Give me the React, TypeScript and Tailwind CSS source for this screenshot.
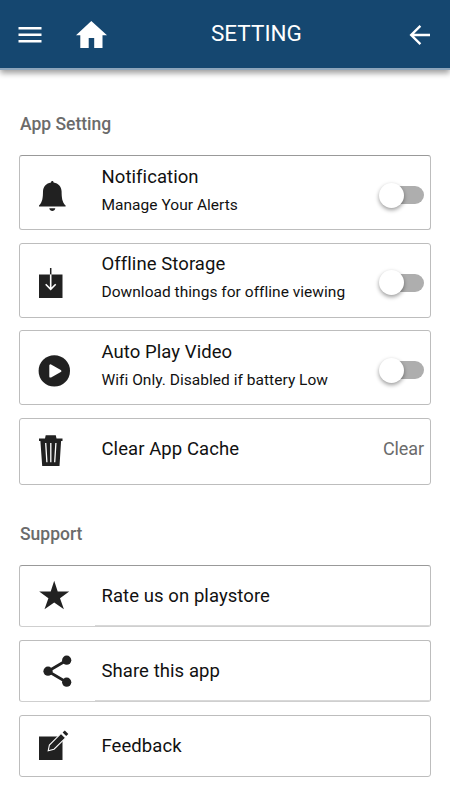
import type { ReactNode } from 'react';

interface RowProps {
  icon: ReactNode;
  title: string;
  subtitle?: string;
  className: string;
  divider?: boolean;
  children?: ReactNode;
}

function Icon({ children }: { children: ReactNode }) {
  return (
    <svg width="40" height="40" viewBox="0 0 40 40" fill="#212121" className="mr-[27.5px] ml-[14px] shrink-0">
      {children}
    </svg>
  );
}

const BellIcon = () => (
  <Icon>
    <path d="M17 9.400C17.200 8.500 17.700 8 18.300 8s1.100.5 1.300 1.400c4.900.9 7.900 4.200 8 9 .1 6 .4 10.300 4 14.100v.9H5v-.9c3.600-3.800 3.900-8.100 4-14.100.1-4.800 3.100-8.100 8-9z" />
    <path d="M15.300 35.300h6c-.3 1.700-1.500 2.700-3 2.700s-2.700-1-3-2.700z" />
  </Icon>
);

const DownloadIcon = () => (
  <Icon>
    <path d="M5 14.500h23.500V38H5z" />
    <path d="M16.700 8v6.500" stroke="#212121" strokeWidth="1.500" />
    <path d="M16.700 14.500v14.800M11.700 24.300l5 5 5-5" fill="none" stroke="#fff" strokeWidth="1.600" />
  </Icon>
);

const PlayIcon = () => (
  <Icon>
    <circle cx="20.300" cy="22.900" r="15.700" />
    <path d="M16.500 17.600v10.800l9.700-5.400z" fill="#fff" stroke="#fff" strokeWidth="2.400" strokeLinejoin="round" />
  </Icon>
);

const TrashIcon = () => (
  <Icon>
    <path d="M11 7.500l.7-3.300h10.100l.7 3.300h6V10h-1.400L25.500 35H8.200L6.400 10H5V7.500z" />
    <path d="M11.700 12l1.200 19.300M16.800 12v19.300M21.900 12l-1.200 19.300" stroke="#fff" strokeWidth="1.300" fill="none" />
  </Icon>
);

const StarIcon = () => (
  <Icon>
    <path d="M20.200 4.700l3.500 10.700h11.500l-9.200 6.900 3.900 11-9.700-6.800-9.700 6.800 3.900-11-9.200-6.900h11.500z" />
  </Icon>
);

const ShareIcon = () => (
  <Icon>
    <path d="M32.700 9.200L14 20.200l18.700 11" fill="none" stroke="#212121" strokeWidth="2.800" />
    <circle cx="32.700" cy="9.200" r="4.600" />
    <circle cx="14" cy="20.200" r="4.600" />
    <circle cx="32.700" cy="31.200" r="4.600" />
  </Icon>
);

const EditIcon = () => (
  <Icon>
    <path d="M5 10.500h23.500V34H5z" />
    <path d="M27 7.400l4.600 4.400L20 23.200l-5.800 1.500 1.200-5.700z" stroke="#fff" strokeWidth="1.100" />
    <path d="M28.600 6.600l2.200-2 3.500 3.400-2.100 2.100z" />
  </Icon>
);

function Row({ icon, title, subtitle, className, divider, children }: RowProps) {
  return (
    <div className={`relative flex items-center rounded-[3px] border border-[#bdbdbd] bg-white ${className}`}>
      {icon}
      <div className="flex-1">
        <div className="text-[18.5px] leading-7 tracking-[0.07px] text-[#111]">{title}</div>
        {subtitle && (
          <div className="mb-[4px] text-[15.5px] leading-7 tracking-[0.03px] whitespace-nowrap text-[#111]">{subtitle}</div>
        )}
      </div>
      {children}
      {divider && <div className="absolute right-px bottom-0 left-[75px] h-px bg-[#d8d8d8]" />}
    </div>
  );
}

function Toggle() {
  return (
    <div className="mt-[5px] mr-[6px] flex h-[18px] w-[39px] shrink-0 items-center rounded-full bg-[#aeaeae]">
      <div className="-ml-[6px] size-[25px] rounded-full bg-white shadow-[0_2px_4px_rgba(0,0,0,0.4)]" />
    </div>
  );
}

export default function App() {
  return (
    <div className="h-[800px] w-[450px] overflow-hidden bg-white font-[Roboto,sans-serif]">
      <header className="flex h-[70px] items-center border-b-2 border-[#8da5bb] bg-[#154770] text-white shadow-[0_3px_6px_rgba(0,0,0,0.4)]">
        <svg width="24" height="18" viewBox="0 0 24 18" className="mt-[2px] ml-[18px]" fill="#fff">
          <path d="M0.500 1h23v2.500h-23zM0.500 7.500h23v2.500h-23zM0.500 14h23v2.500h-23z" />
        </svg>
        <svg width="32" height="28" viewBox="0 0 32 28" className="mt-px ml-[34px]" fill="#fff">
          <path d="M15.300 0L31 14.200h-4.500V27h-8.300V17h-5.500v10H4.300V14.200H0z" />
        </svg>
        <h1 className="-mt-[2px] ml-[103px] text-[22.5px] leading-7">SETTING</h1>
        <svg width="22" height="22" viewBox="0 0 22 22" className="mt-[2px] mr-[19px] ml-auto" fill="none" stroke="#fff" strokeWidth="2.400">
          <path d="M21 11H2.500M11.400 1.800L2.200 11l9.200 9.200" />
        </svg>
      </header>

      <main className="px-[19px]">
        <h2 className="mt-[40px] ml-px text-[17.5px] leading-7 font-medium text-[#6b6b6b]">App Setting</h2>
        <section className="mt-[17px]">
          <Row icon={<BellIcon />} title="Notification" subtitle="Manage Your Alerts" className="h-[75px] border-t-[#999]">
            <Toggle />
          </Row>
          <Row icon={<DownloadIcon />} title="Offline Storage" subtitle="Download things for offline viewing" className="mt-[12.5px] h-[75px]">
            <Toggle />
          </Row>
          <Row icon={<PlayIcon />} title="Auto Play Video" subtitle="Wifi Only. Disabled if battery Low" className="mt-[12.5px] h-[75px]">
            <Toggle />
          </Row>
          <Row icon={<TrashIcon />} title="Clear App Cache" className="mt-[12.5px] h-[67px] *:[div]:-mt-[5px]">
            <div className="mr-[6px] text-[18px] leading-7 tracking-[-0.1px] text-[#6b6b6b]">Clear</div>
          </Row>
        </section>

        <h2 className="mt-[35px] ml-px text-[17.5px] leading-7 font-medium text-[#6b6b6b]">Support</h2>
        <section className="mt-[17.5px] flex flex-col gap-[13px]">
          <Row icon={<StarIcon />} title="Rate us on playstore" className="h-[62px] border-t-[#999] border-b-[#cfcfcf]" divider />
          <Row icon={<ShareIcon />} title="Share this app" className="h-[62px] border-b-[#cfcfcf]" divider />
          <Row icon={<EditIcon />} title="Feedback" className="h-[62px]" />
        </section>
      </main>
    </div>
  );
}
